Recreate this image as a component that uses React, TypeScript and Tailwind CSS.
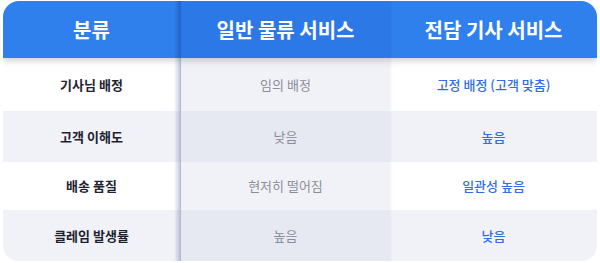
import React from 'react';

type Row = { label: string; normal: string; dedicated: string };

const rows: Row[] = [
  { label: '기사님 배정', normal: '임의 배정', dedicated: '고정 배정 (고객 맞춤)' },
  { label: '고객 이해도', normal: '낮음', dedicated: '높음' },
  { label: '배송 품질', normal: '현저히 떨어짐', dedicated: '일관성 높음' },
  { label: '클레임 발생률', normal: '높음', dedicated: '낮음' },
];

export default function App() {
  return (
    <div
      className="w-[600px] h-[263px] bg-white pt-[1px] px-[3px]"
      style={{ fontFamily: '"Noto Sans CJK KR", "Noto Sans", sans-serif' }}
    >
      <div className="rounded-[16px] overflow-hidden bg-white">
        {/* header */}
        <div className="relative z-20 grid grid-cols-[177px_210px_1fr] h-[57px] bg-[#2f80ed] text-white font-bold text-[20px] shadow-[0_3px_6px_rgba(40,50,90,0.22)]">
          <div className="flex items-center justify-center bg-[linear-gradient(to_left,rgba(20,40,110,0.3),rgba(20,40,110,0)_6px)]">
            분류
          </div>
          <div className="flex items-center justify-center bg-[#2c78e6] border-l border-[#2a64c4]">
            일반 물류 서비스
          </div>
          <div className="flex items-center justify-center bg-[linear-gradient(to_right,rgba(20,40,110,0.08),rgba(20,40,110,0)_3px)]">
            전담 기사 서비스
          </div>
        </div>

        {rows.map((r, i) => {
          const alt = i % 2 === 1;
          return (
            <div
              key={r.label}
              className={`grid grid-cols-[177px_210px_1fr] text-[13px] ${i === 0 ? 'h-[53px]' : i === 2 ? 'h-[48px]' : 'h-[51px]'} ${alt ? 'bg-[#f1f2f8]' : 'bg-white'}`}
            >
              <div className="flex items-center justify-center font-semibold text-[#1f2330] bg-[linear-gradient(to_left,rgba(70,80,140,0.3),rgba(70,80,140,0)_6px)]">
                {r.label}
              </div>
              <div
                className={`flex items-center justify-center text-[#8a8d96] border-l border-[#b3b9d4] ${alt ? 'bg-[#e6e8f2]' : 'bg-[#f1f2f8]'}`}
              >
                {r.normal}
              </div>
              <div className="flex items-center justify-center font-medium text-[#2f6fe3] bg-[linear-gradient(to_right,rgba(70,80,140,0.06),rgba(70,80,140,0)_3px)]">
                {r.dedicated}
              </div>
            </div>
          );
        })}
      </div>
    </div>
  );
}
